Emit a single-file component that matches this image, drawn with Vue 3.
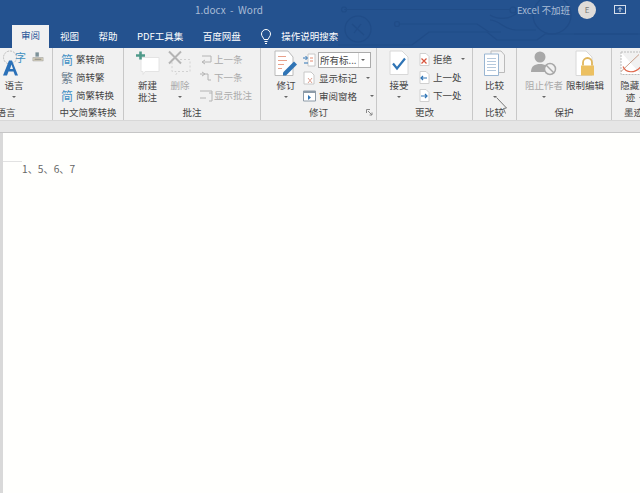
<script setup>
const tabs = ['视图', '帮助', 'PDF工具集', '百度网盘']
const comments = [
  { text: '上一条', d: 'M3 3h9v6H4M6 7L3 9l3 2' },
  { text: '下一条', d: 'M1 3h8v6h3M3 1l3 2-3 2' },
  { text: '显示批注', d: 'M1 2h12v2M10 4h3v8h-3M1 9h6' }
]
</script>

<template>
  <div class="word">
    <header class="titlebar">
      <svg class="circuit" width="310" height="48" viewBox="0 0 310 48" fill="none">
        <g stroke="#1f4a85" stroke-width="1.2">
          <path d="M14 9.5H180" />
          <circle cx="14" cy="9.5" r="2.5" />
          <circle cx="183" cy="10" r="3" />
          <circle cx="28" cy="29" r="13" />
          <path d="M22 24l12 11M24 33l7-9" />
          <path d="M70 24h77l12 8h12" />
          <circle cx="67" cy="24" r="2.5" />
          <path d="M8 45h74l17-13h58l10 8h40l8-6h93" />
          <circle cx="222" cy="15" r="19" />
          <path d="M190 10c-8 10-22 10-30 5M244 34h66M160 20c10 0 14 10 26 10h20" />
        </g>
      </svg>
      <div class="title-row">
        <span class="doc-name">1.docx&nbsp; - &nbsp;Word</span>
        <div class="account">
          <span class="user">Excel 不加班</span>
          <span class="avatar">E</span>
          <svg class="share" width="12" height="9" viewBox="0 0 12 9" fill="none" stroke="#d5deeb">
            <rect x=".5" y=".5" width="11" height="8" />
            <path d="M6 7V3M4 4.5L6 2.5l2 2" />
          </svg>
        </div>
      </div>
      <nav class="tabs">
        <span class="tab active">审阅</span>
        <span v-for="tab in tabs" :key="tab" class="tab">{{ tab }}</span>
        <span class="search">
          <svg width="10" height="15" viewBox="0 0 10 15" fill="none" stroke="#fff">
            <path d="M3 10.5C2.500 8.500.5 7.500.5 5a4.500 4.500 0 019 0c0 2.500-2 3.500-2.500 5.500zM3.500 12.500h3M4 14.500h2" />
          </svg>
          操作说明搜索
        </span>
      </nav>
    </header>

    <section class="ribbon">
      <div class="group g-lang">
        <div class="body">
          <div class="big">
            <svg width="24" height="26" viewBox="0 0 24 26">
              <circle cx="8" cy="7" r="6.500" fill="none" stroke="#bbb" stroke-dasharray="2 1" />
              <text x="13" y="11" class="glyph" fill="#3f90c0">字</text>
              <path d="M1 25L7 10h3l6 15h-3l-1.500-4h-5L5 25zM8 18.500h3L9.500 14z" fill="#2a70b8" />
            </svg>
            <span>语言</span>
            <i class="caret"></i>
          </div>
          <svg class="translate" width="12" height="11" viewBox="0 0 14 12">
            <path d="M4 0h4v5H4z" fill="#7d9299" />
            <path d="M1 6h12v4H1z" fill="#d8d2bc" stroke="#999" stroke-width=".6" />
            <path d="M3 8h8" stroke="#777" />
          </svg>
        </div>
        <div class="label">语言</div>
      </div>

      <div class="group g-zh">
        <div class="rows">
          <div class="row"><b class="han down">简</b>繁转简</div>
          <div class="row"><b class="han down gray">繁</b>简转繁</div>
          <div class="row"><b class="han">简</b>简繁转换</div>
        </div>
        <div class="label">中文简繁转换</div>
      </div>

      <div class="group g-comment">
        <div class="body">
          <div class="big new">
            <svg width="26" height="26" viewBox="0 0 26 26" fill="none">
              <path d="M6 7h18v14H10l-2 3v-3H6z" fill="#fff" stroke="#e4e4e4" />
              <path d="M1 5h9M5.500 1v8" stroke="#4f9a8a" stroke-width="2.600" />
            </svg>
            <span>新建</span>
            <span>批注</span>
          </div>
          <div class="big del off">
            <svg width="24" height="26" viewBox="0 0 24 26" fill="none">
              <path d="M4 9h18v12H10l-2 3v-3H4z" stroke="#d2d2d2" stroke-dasharray="2 2" />
              <path d="M1 1l12 12M13 1L1 13" stroke="#b4b4b4" stroke-width="2" />
            </svg>
            <span>删除</span>
            <i class="caret"></i>
          </div>
          <div class="rows off">
            <div v-for="item in comments" :key="item.text" class="row">
              <svg width="14" height="13" viewBox="0 0 14 13" fill="none" stroke="#b4b4b4">
                <path :d="item.d" />
              </svg>
              {{ item.text }}
            </div>
          </div>
        </div>
        <div class="label">批注</div>
      </div>

      <div class="group g-track">
        <div class="body">
          <div class="big">
            <svg width="24" height="26" viewBox="0 0 24 26" fill="none">
              <path d="M1 .5h13l5 6V25H1z" fill="#fff" stroke="#bbb" />
              <path d="M4 6h8M4 10h9M4 14h6M4 18h4" stroke="#e8a08a" />
              <path d="M9 22l11-11 3 3-11 11H9z" fill="#2f74b5" />
            </svg>
            <span>修订</span>
            <i class="caret"></i>
          </div>
          <div class="track-side">
            <div class="select-row">
              <svg width="13" height="14" viewBox="0 0 13 14" fill="none">
                <path d="M5 1h7v12H5z" fill="#fff" stroke="#c8c8c8" />
                <path d="M7 5h3M7 8h3" stroke="#e58a70" />
                <path d="M0 5h4M2.500 3l2 2-2 2M5 10H1" stroke="#2f74b5" />
              </svg>
              <div class="select"><span>所有标...</span><em><i class="caret"></i></em></div>
            </div>
            <div class="row">
              <svg width="13" height="14" viewBox="0 0 13 14" fill="none">
                <path d="M1 1h7l3 3v9H1z" fill="#fff" stroke="#c8c8c8" />
                <path d="M5 7l4 5M9 7l-4 5" stroke="#dda090" />
              </svg>
              显示标记<i class="caret wide"></i>
            </div>
            <div class="row">
              <svg width="13" height="14" viewBox="0 0 13 14" fill="none">
                <path d="M.5 2h12v10H.5z" fill="#fff" stroke="#8d9ba8" />
                <path d="M.5 2h12v2H.5z" fill="#8d9ba8" />
                <path d="M5 6l3 2.500L5 11z" fill="#2f74b5" />
              </svg>
              审阅窗格<i class="caret wider"></i>
            </div>
          </div>
        </div>
        <div class="label">修订</div>
        <svg class="launcher" width="7" height="7" viewBox="0 0 7 7" fill="none" stroke="#888">
          <path d="M.5 4V.5H4M2 2l4 4M6 3.500V6H3.500" />
        </svg>
      </div>

      <div class="group g-changes">
        <div class="body">
          <div class="big">
            <svg width="20" height="26" viewBox="0 0 20 26" fill="none">
              <path d="M1 .5h12l6 6V24H1z" fill="#fff" stroke="#d8d8d8" />
              <path d="M4 13l4 5 8-10" stroke="#2f74b5" stroke-width="2.200" />
            </svg>
            <span>接受</span>
            <i class="caret"></i>
          </div>
          <div class="rows">
            <div class="row">
              <svg width="11" height="13" viewBox="0 0 11 13" fill="none">
                <path d="M1 .5h6l3 3V12.500H1z" fill="#fff" stroke="#d0d0d0" />
                <path d="M2.500 5.500l5 5M7.500 5.500l-5 5" stroke="#d8553d" stroke-width="1.200" />
              </svg>
              拒绝<i class="caret wide"></i>
            </div>
            <div class="row">
              <svg width="11" height="13" viewBox="0 0 11 13" fill="none">
                <path d="M1 .5h6l3 3V12.500H1z" fill="#fff" stroke="#d0d0d0" />
                <path d="M8 7H2M4 5L2 7l2 2" stroke="#2f74b5" stroke-width="1.200" />
              </svg>
              上一处
            </div>
            <div class="row">
              <svg width="11" height="13" viewBox="0 0 11 13" fill="none">
                <path d="M1 .5h6l3 3V12.500H1z" fill="#fff" stroke="#d0d0d0" />
                <path d="M2 7h6M6 5l2 2-2 2" stroke="#2f74b5" stroke-width="1.200" />
              </svg>
              下一处
            </div>
          </div>
        </div>
        <div class="label">更改</div>
      </div>

      <div class="group g-compare">
        <div class="body">
          <div class="big">
            <svg width="21" height="26" viewBox="0 0 21 26" fill="none">
              <path d="M7 .5h10l3.500 4V22H7z" fill="#f4f4f4" stroke="#bbb" />
              <path d="M.5 3.500h14V25H.5z" fill="#fff" stroke="#9ab6d2" />
              <path d="M3 8h9M3 11h9M3 14h9M3 17h9M3 20h9" stroke="#b4c8dc" />
            </svg>
            <span>比较</span>
            <i class="caret"></i>
          </div>
        </div>
        <div class="label">比较</div>
      </div>

      <div class="group g-protect">
        <div class="body">
          <div class="big block off">
            <svg width="26" height="25" viewBox="0 0 26 25" fill="none">
              <circle cx="9" cy="6" r="5.500" fill="#a8a8a8" />
              <path d="M0 21c0-6 4-8 9-8s9 2 9 8z" fill="#a8a8a8" />
              <circle cx="19" cy="18" r="5.500" fill="#f1f1f1" stroke="#a8a8a8" stroke-width="1.500" />
              <path d="M15 14l8 8" stroke="#a8a8a8" stroke-width="1.500" />
            </svg>
            <span>阻止作者</span>
            <i class="caret"></i>
          </div>
          <div class="big limit">
            <svg width="21" height="26" viewBox="0 0 21 26" fill="none">
              <path d="M1 .5h10l6 6V25H1z" fill="#fff" stroke="#d8d8d8" />
              <path d="M8 15v-3a4.500 4.500 0 019 0v3" stroke="#e0b65c" stroke-width="1.800" />
              <rect x="6" y="15" width="13" height="10" fill="#ecc061" />
            </svg>
            <span>限制编辑</span>
          </div>
        </div>
        <div class="label">保护</div>
      </div>

      <div class="group g-ink">
        <div class="body">
          <div class="big">
            <svg width="21" height="24" viewBox="0 0 21 24" fill="none">
              <path d="M1 .5h20M1 .5V23h20" stroke="#bbb" stroke-dasharray="2 1" fill="#fff" />
              <path d="M1 20L19 3" stroke="#c9a08c" />
              <path d="M3 15c3 7 12 7 18 0" stroke="#e0664a" stroke-width="1.200" />
            </svg>
            <span>隐藏墨</span>
            <span>迹<i class="caret inline"></i></span>
          </div>
        </div>
        <div class="label">墨迹</div>
      </div>

      <!-- 鼠标指针 -->
      <svg class="cursor" width="11" height="22" viewBox="0 0 11 22" fill="none" stroke="#777">
        <path d="M.5.500l10 10.500-3 .500 2 5" />
      </svg>
    </section>

    <div class="ruler"></div>

    <main class="page">
      <div class="margin-mark"></div>
      <p class="content">1、5、6、7</p>
    </main>
  </div>
</template>

<style scoped>
.word {
  position: relative;
  width: 640px;
  height: 493px;
  overflow: hidden;
  display: flex;
  flex-direction: column;
  background: #fff;
  font-family: "Noto Sans CJK SC", "Noto Sans", sans-serif;
  font-size: 9.5px;
  color: #444;
}

.titlebar {
  position: relative;
  height: 48px;
  flex: none;
  display: flex;
  flex-direction: column;
  background: #24528f;
  color: #fff;
}

.circuit {
  position: absolute;
  right: 0;
  top: 0;
  opacity: 0.75;
}

.title-row {
  position: relative;
  height: 19px;
  margin-bottom: 6px;
  display: flex;
  align-items: center;
  padding-left: 195px;
  padding-right: 14px;
}

.doc-name {
  font-size: 10px;
  color: #a9bcd6;
}

.account {
  margin-left: auto;
  display: flex;
  align-items: center;
}

.user {
  font-size: 9.5px;
  color: #a9bcd6;
}

.avatar {
  width: 18px;
  height: 18px;
  margin-left: 8px;
  margin-right: 18px;
  border-radius: 50%;
  background: #dfdcd9;
  color: #777;
  font-size: 8px;
  text-align: center;
  line-height: 18px;
}

.tabs {
  position: relative;
  height: 23px;
  display: flex;
  padding-left: 12px;
  align-items: center;
  line-height: 21px;
}

.tab {
  margin-right: 19.5px;
}

.tab.active {
  height: 23px;
  width: 37px;
  margin-right: 11px;
  background: #f1f1f1;
  color: #2b579a;
  text-align: center;
  line-height: 21px;
}

.search {
  display: flex;
  align-items: center;
  gap: 10px;
  margin-left: 1px;
}

.ribbon {
  position: relative;
  height: 72px;
  flex: none;
  display: flex;
  margin-left: -40px;
  background: #f1f1f1;
}

.group {
  position: relative;
  flex: none;
  display: flex;
  flex-direction: column;
  border-right: 1px solid #c8c8c8;
}

.body {
  display: flex;
  flex: 1;
}

.label {
  height: 15px;
  line-height: 14px;
  text-align: center;
  white-space: nowrap;
}

.big {
  display: flex;
  flex-direction: column;
  align-items: center;
  padding-top: 2px;
  line-height: 12px;
}

.big svg {
  margin-bottom: 2px;
  height: 27px;
}

.off {
  color: #aaa;
}

.glyph {
  font-size: 11px;
}

.caret {
  display: block;
  width: 0;
  height: 0;
  margin-top: 5px;
  border: 2px solid transparent;
  border-top: 2px solid #666;
  border-bottom: 0;
}

.caret.wide {
  margin: 0 0 0 6px;
}

.caret.wider {
  margin: 0 0 0 10px;
}

.caret.inline {
  display: inline-block;
  margin: 0 0 2px 4px;
}

.select .caret {
  margin-top: 6px;
}

.rows {
  display: flex;
  flex-direction: column;
  padding-top: 2px;
}

.row {
  height: 18px;
  display: flex;
  align-items: center;
  gap: 3px;
  white-space: nowrap;
}

.g-lang {
  width: 92px;
}

.g-lang .body {
  padding-left: 41px;
}

.g-lang .big {
  width: 26px;
}

.translate {
  margin: 4px 0 0 5px;
}

.g-zh {
  width: 70px;
}

.g-zh .rows {
  flex: 1;
  padding-left: 8px;
}

.han {
  width: 12px;
  font-size: 12px;
  font-weight: 400;
  color: #3f8fc4;
  text-align: center;
}

.han.gray {
  color: #6b7f90;
}

.g-comment {
  width: 136px;
}

.g-comment .body {
  padding-left: 10px;
}

.new {
  width: 27px;
}

.del {
  width: 26px;
  margin-left: 6px;
}

.g-comment .rows {
  margin-left: 6px;
}

.g-comment .row {
  gap: 1px;
}

.g-track {
  width: 115px;
}

.g-track .body {
  padding-left: 13px;
}

.g-track .big {
  width: 24px;
}

.track-side {
  margin-left: 5px;
  padding-top: 3px;
  display: flex;
  flex-direction: column;
}

.select-row {
  height: 18px;
  display: flex;
  align-items: center;
  gap: 2px;
}

.select {
  width: 53px;
  height: 16px;
  box-sizing: border-box;
  display: flex;
  background: #fff;
  border: 1px solid #ababab;
  line-height: 14px;
  padding-left: 1px;
}

.select span {
  flex: 1;
}

.select em {
  width: 9px;
  border-left: 1px solid #ddd;
  padding-left: 2px;
}

.launcher {
  position: absolute;
  right: 3px;
  bottom: 4px;
}

.g-changes {
  width: 95px;
}

.g-changes .body {
  padding-left: 12px;
}

.g-changes .big {
  width: 20px;
}

.g-changes .rows {
  margin-left: 10px;
}

.g-compare {
  width: 43px;
}

.g-compare .body {
  justify-content: center;
}

.g-protect {
  width: 94px;
}

.g-protect .body {
  padding-left: 8px;
}

.block {
  width: 38px;
}

.limit {
  width: 38px;
  margin-left: 3px;
}

.g-ink {
  width: 60px;
  border-right: 0;
}

.g-ink .body {
  padding-left: 8px;
}

.g-ink .big {
  width: 29px;
}

.g-ink .big svg {
  align-self: flex-start;
}

.g-ink .label {
  text-align: left;
  padding-left: 12px;
}

.cursor {
  position: absolute;
  left: 536px;
  top: 49px;
}

.ruler {
  height: 13px;
  flex: none;
  box-sizing: border-box;
  background: #e6e6e6;
  border-top: 1px solid #d8d8d8;
  border-bottom: 1px solid #c6c6c6;
}

.page {
  flex: 1;
  border-left: 3px solid #d9d9d9;
  background: #fffffd;
}

.margin-mark {
  width: 19px;
  height: 1px;
  margin-top: 28px;
  background: #e2e2e2;
}

.content {
  margin: 0;
  padding: 0 0 0 19px;
  line-height: 14px;
  font-size: 10.2px;
  color: #666;
}
</style>
